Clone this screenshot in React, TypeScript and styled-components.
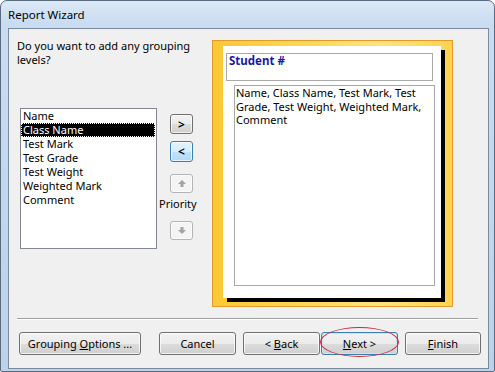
import styled, { createGlobalStyle } from "styled-components";

const GlobalStyle = createGlobalStyle`
  html, body {
    margin: 0;
    padding: 0;
    background: #ffffff;
  }
  body {
    font-family: "Noto Sans", "Liberation Sans", sans-serif;
    font-size: 11px;
    color: #000;
  }
`;

const Window = styled.div`
  width: 495px;
  height: 372px;
  box-sizing: border-box;
  display: flex;
  flex-direction: column;
  border: 1px solid #5a6b80;
  border-radius: 7px 7px 2px 2px;
  background: linear-gradient(180deg, #dce9f7 0%, #cadcf1 22px, #bcd2eb 100%);
  overflow: hidden;
`;

const TitleBar = styled.div`
  height: 27px;
  display: flex;
  align-items: center;
  padding-left: 7px;
  font-size: 11.5px;
  color: #000;
`;

const Client = styled.div`
  flex: 1;
  margin: 0 5px 2px 7px;
  box-sizing: border-box;
  border: 1px solid #7b8b9e;
  background: #f0f0f0;
  display: flex;
  flex-direction: column;
`;

const Body = styled.div`
  display: flex;
  align-items: flex-start;
  padding: 10px 0 0 8px;
`;

const LeftPart = styled.div`
  width: 176px;
  display: flex;
  flex-direction: column;
`;

const Question = styled.p`
  margin: 0;
  line-height: 14px;
`;

const ListRow = styled.div`
  display: flex;
  align-items: flex-start;
  margin: 41px 0 0 3px;
`;

const ListBox = styled.div`
  width: 137px;
  height: 141px;
  box-sizing: border-box;
  border: 1px solid #828790;
  background: #fff;
`;

const Item = styled.div<{ $selected?: boolean }>`
  height: 14px;
  line-height: 14px;
  padding-left: 2px;
  margin-right: 1px;
  white-space: nowrap;
  background: ${(p) => (p.$selected ? "#000" : "transparent")};
  color: ${(p) => (p.$selected ? "#fff" : "#000")};
  outline: ${(p) => (p.$selected ? "1px dotted #fff" : "none")};
  outline-offset: -1px;
`;

const MoveColumn = styled.div`
  width: 36px;
  display: flex;
  flex-direction: column;
`;

const SmallButton = styled.div<{ $top: number; $h: number; $kind?: "focus" | "disabled" }>`
  width: 23px;
  height: ${(p) => p.$h}px;
  margin: ${(p) => p.$top}px 0 0 13px;
  box-sizing: border-box;
  border-radius: 3px;
  display: flex;
  align-items: center;
  justify-content: center;
  font-size: 12px;
  font-weight: 600;
  border: 1px solid
    ${(p) =>
      p.$kind === "focus" ? "#3c7fb1" : p.$kind === "disabled" ? "#b1b5b8" : "#707070"};
  background: ${(p) =>
    p.$kind === "focus"
      ? "linear-gradient(180deg, #e5f3fc 0%, #d6ecfb 50%, #c2e2f8 50%, #b2daf5 100%)"
      : p.$kind === "disabled"
      ? "#f4f4f4"
      : "linear-gradient(180deg, #f2f2f2 0%, #ebebeb 50%, #dddddd 50%, #cfcfcf 100%)"};
  box-shadow: inset 0 0 0 1px rgba(255, 255, 255, 0.7);
`;

const PriorityLabel = styled.div`
  margin: 4px 0 0 2px;
  line-height: 14px;
`;

const Preview = styled.div`
  margin: 1px 0 0 19px;
  width: 241px;
  height: 267px;
  box-sizing: border-box;
  border: 1px solid #e39a2c;
  background: linear-gradient(90deg, #fcc834 0%, #fdd651 35%, #fee27e 70%, #fdd44e 100%);
  padding: 5px 0 0 10px;
`;

const Page = styled.div`
  width: 218px;
  height: 252px;
  background: #fff;
  box-shadow: 4px 4px 0 #000;
  padding: 7px 0 0 3px;
  box-sizing: border-box;
`;

const GroupHeader = styled.div`
  width: 207px;
  height: 28px;
  box-sizing: border-box;
  border: 1px solid #a9a9a9;
  padding: 0 0 0 2px;
  line-height: 14px;
  font-weight: 700;
  font-size: 11.5px;
  color: #1a1a9e;
`;

const Detail = styled.div`
  width: 201px;
  height: 201px;
  box-sizing: border-box;
  margin: 4px 0 0 8px;
  border: 1px solid #a9a9a9;
  padding: 0 0 0 1px;
  line-height: 13.5px;
`;

const Separator = styled.div`
  margin: 11px 10px 0 8px;
  border-top: 1px solid #a0a0a0;
  border-bottom: 1px solid #ffffff;
`;

const ButtonRow = styled.div`
  display: flex;
  margin-top: 12px;
  padding-left: 10px;
`;

const Slot = styled.div<{ $ml: number }>`
  position: relative;
  margin-left: ${(p) => p.$ml}px;
`;

const Button = styled.button<{ $w: number; $default?: boolean }>`
  width: ${(p) => p.$w}px;
  height: 23px;
  margin: 0;
  padding: 0;
  box-sizing: border-box;
  font-family: "Noto Sans", "Liberation Sans", sans-serif;
  font-size: 11px;
  color: #000;
  border-radius: 3px;
  border: 1px solid ${(p) => (p.$default ? "#3c7fb1" : "#707070")};
  background: linear-gradient(180deg, #f2f2f2 0%, #ebebeb 50%, #dddddd 50%, #cfcfcf 100%);
  box-shadow: inset 0 0 0 1px ${(p) => (p.$default ? "#c4e5f8" : "rgba(255,255,255,0.75)")};
  u {
    text-decoration: underline;
    text-underline-offset: 1px;
  }
`;

const Ellipse = styled.div`
  position: absolute;
  left: -1px;
  top: -5px;
  width: 79px;
  height: 30px;
  box-sizing: border-box;
  border: 1px solid #d0283a;
  border-radius: 50%;
  pointer-events: none;
`;

const Arrow = ({ down }: { down?: boolean }) => (
  <svg width="8" height="7" viewBox="0 0 8 7" style={{ transform: down ? "rotate(180deg)" : undefined }}>
    <path d="M4 0 L8 4 L5.5 4 L5.5 7 L2.5 7 L2.5 4 L0 4 Z" fill="#a3a3a3" />
  </svg>
);

const fields = ["Name", "Class Name", "Test Mark", "Test Grade", "Test Weight", "Weighted Mark", "Comment"];

export default function App() {
  return (
    <>
      <GlobalStyle />
      <Window>
        <TitleBar>Report Wizard</TitleBar>
        <Client>
          <Body>
            <LeftPart>
              <Question>
                Do you want to add any grouping
                <br />
                levels?
              </Question>
              <ListRow>
                <ListBox>
                  {fields.map((f) => (
                    <Item key={f} $selected={f === "Class Name"}>
                      {f}
                    </Item>
                  ))}
                </ListBox>
                <MoveColumn>
                  <SmallButton $top={6} $h={20}>&gt;</SmallButton>
                  <SmallButton $top={7} $h={21} $kind="focus">&lt;</SmallButton>
                  <SmallButton $top={12} $h={19} $kind="disabled">
                    <Arrow />
                  </SmallButton>
                  <PriorityLabel>Priority</PriorityLabel>
                  <SmallButton $top={10} $h={19} $kind="disabled">
                    <Arrow down />
                  </SmallButton>
                </MoveColumn>
              </ListRow>
            </LeftPart>
            <Preview>
              <Page>
                <GroupHeader>Student #</GroupHeader>
                <Detail>
                  Name, Class Name, Test Mark, Test
                  <br />
                  Grade, Test Weight, Weighted Mark,
                  <br />
                  Comment
                </Detail>
              </Page>
            </Preview>
          </Body>
          <Separator />
          <ButtonRow>
            <Slot $ml={0}>
              <Button $w={122}>
                Grouping <u>O</u>ptions ...
              </Button>
            </Slot>
            <Slot $ml={18}>
              <Button $w={77}>Cancel</Button>
            </Slot>
            <Slot $ml={7}>
              <Button $w={77}>
                &lt; <u>B</u>ack
              </Button>
            </Slot>
            <Slot $ml={1}>
              <Button $w={77} $default>
                <u>N</u>ext &gt;
              </Button>
              <Ellipse />
            </Slot>
            <Slot $ml={7}>
              <Button $w={76}>
                <u>F</u>inish
              </Button>
            </Slot>
          </ButtonRow>
        </Client>
      </Window>
    </>
  );
}
